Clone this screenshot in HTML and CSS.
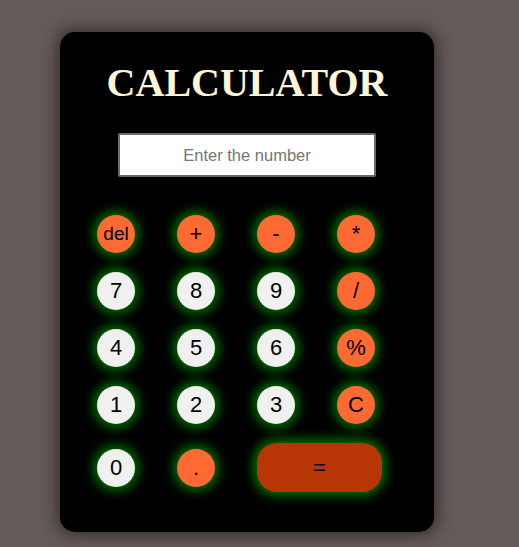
FILE: index.html
```html
<!DOCTYPE html>
<html>
<head>
<meta charset="utf-8">
<link rel="stylesheet" href="styles.css">
</head>
<body>
<div class="calc">
  <h1 class="title">CALCULATOR</h1>
  <input class="display" type="text" placeholder="Enter the number">
  <div class="keys">
    <button class="key op small">del</button>
    <button class="key op">+</button>
    <button class="key op">-</button>
    <button class="key op">*</button>
    <button class="key num">7</button>
    <button class="key num">8</button>
    <button class="key num">9</button>
    <button class="key op">/</button>
    <button class="key num">4</button>
    <button class="key num">5</button>
    <button class="key num">6</button>
    <button class="key op">%</button>
    <button class="key num">1</button>
    <button class="key num">2</button>
    <button class="key num">3</button>
    <button class="key op">C</button>
    <button class="key num">0</button>
    <button class="key op">.</button>
    <button class="key equals">=</button>
  </div>
</div>
</body>
</html>
```
FILE: styles.css
```css
html, body {
  margin: 0;
  padding: 0;
  background: #645a5a;
  height: 100%;
}
body {
  padding: 32px 0 0 60px;
  box-sizing: border-box;
}
.calc {
  width: 374px;
  height: 500px;
  background: #000;
  border-radius: 15px;
  box-shadow: 0 0 14px 4px rgba(30, 24, 24, 0.6);
  display: flex;
  flex-direction: column;
  align-items: center;
  box-sizing: border-box;
  padding-top: 28px;
}
.title {
  margin: 0;
  font-family: "Liberation Serif", "Times New Roman", serif;
  font-weight: bold;
  font-size: 40px;
  line-height: 46px;
  color: #fdf6d6;
}
.display {
  margin-top: 27px;
  width: 258px;
  height: 44px;
  box-sizing: border-box;
  border: 2px solid #6b6b6b;
  border-radius: 2px;
  background: #fff;
  text-align: center;
  font-family: "Liberation Sans", Arial, sans-serif;
  font-size: 16.5px;
  outline: none;
}
.display::placeholder {
  color: #757575;
}
.keys {
  margin-top: 38px;
  align-self: flex-start;
  margin-left: 37px;
  display: grid;
  grid-template-columns: repeat(4, 38px);
  column-gap: 42px;
  row-gap: 19px;
  align-items: center;
}
.key {
  width: 38px;
  height: 38px;
  border: none;
  border-radius: 50%;
  padding: 0;
  font-family: "Liberation Sans", Arial, sans-serif;
  font-size: 22px;
  color: #000;
  box-shadow: 0 0 11px 4px #007000;
  display: flex;
  align-items: center;
  justify-content: center;
}
.key.small {
  font-size: 19px;
}
.num {
  background: #f0f0f0;
}
.op {
  background: #ff6a33;
}
.equals {
  grid-column: span 2;
  width: 125px;
  height: 49px;
  border-radius: 20px;
  background: #b83606;
}
```
